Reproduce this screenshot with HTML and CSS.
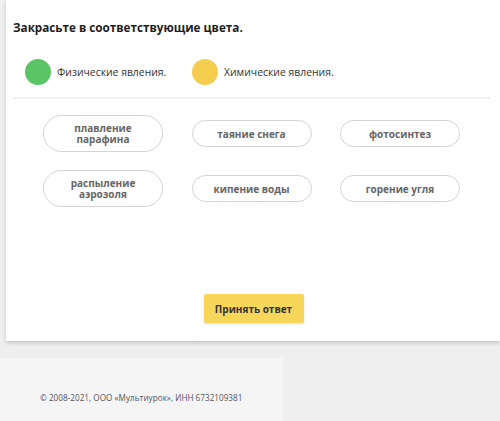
FILE: index.html
```html
<!DOCTYPE html>
<html>
<head>
    <title>Закрасьте в соответствующие цвета</title>
    <link rel="stylesheet" href="styles.css">
</head>
<body>
    <div class="page">
        <div class="task-card">
            <h2 class="task-title">Закрасьте в соответствующие цвета.</h2>

            <div class="legend">
                <div class="legend-item">
                    <span class="dot dot-green"></span>
                    <span>Физические явления.</span>
                </div>
                <div class="legend-item">
                    <span class="dot dot-yellow"></span>
                    <span>Химические явления.</span>
                </div>
            </div>

            <div class="chips">
                <div class="chip chip-tall"><span>плавление</span><span>парафина</span></div>
                <div class="chip">таяние снега</div>
                <div class="chip">фотосинтез</div>
                <div class="chip chip-tall"><span>распыление</span><span>аэрозоля</span></div>
                <div class="chip">кипение воды</div>
                <div class="chip">горение угля</div>
            </div>

            <div class="actions">
                <button class="submit-btn">Принять ответ</button>
            </div>
        </div>
    </div>

    <div class="footer">
        © 2008-2021, ООО «Мультиурок», ИНН 6732109381
    </div>
</body>
</html>
```

FILE: styles.css
```css
/* Task page */
body {
    margin: 0;
    background: #efefef;
    font-family: "Open Sans", "Liberation Sans", sans-serif;
    color: #222;
}

.page {
    padding-left: 6px;
}

.task-card {
    background: white;
    padding: 18px 10px 18px 7px;
    box-shadow: 0 2px 4px rgba(0,0,0,0.18);
}

.task-title {
    margin: 0;
    font-size: 11.7px;
    line-height: 18px;
    font-weight: 700;
    color: #1e1e1e;
}

.legend {
    display: flex;
    padding: 23px 0 12px 12px;
    border-bottom: 2px solid #f1f1f1;
}

.legend-item {
    width: 167px;
    display: flex;
    align-items: center;
    gap: 6px;
    font-size: 10.4px;
    color: #333;
}

.dot {
    width: 26px;
    height: 26px;
    border-radius: 50%;
    flex-shrink: 0;
}

.dot-green {
    background: #5ac466;
}

.dot-yellow {
    background: #f5cd4e;
}

.chips {
    display: grid;
    grid-template-columns: repeat(3, 120px);
    grid-auto-rows: 37px;
    column-gap: 28.5px;
    row-gap: 18px;
    align-items: center;
    padding: 16px 0 0 30px;
}

.chip {
    box-sizing: border-box;
    height: 27px;
    border: 1.5px solid #d3d3d3;
    border-radius: 14px;
    display: flex;
    flex-direction: column;
    align-items: center;
    justify-content: center;
    text-align: center;
    font-size: 10px;
    line-height: 12px;
    font-weight: 700;
    color: #666;
}

.chip-tall {
    height: 37px;
    border-radius: 19px;
    line-height: 11px;
}

.actions {
    display: flex;
    justify-content: center;
    padding: 87px 0 0 4px;
}

.submit-btn {
    width: 100px;
    height: 29px;
    background: #f7d65a;
    border: none;
    border-radius: 2px;
    box-shadow: 0 1px 3px rgba(0,0,0,0.12);
    font-family: inherit;
    font-size: 10px;
    font-weight: 700;
    color: #333;
}

.footer {
    width: 283px;
    height: 63px;
    margin-top: 17px;
    background: #f5f5f5;
    box-sizing: border-box;
    padding: 34px 0 0 40px;
    font-size: 8.2px;
    color: #555;
}
```
